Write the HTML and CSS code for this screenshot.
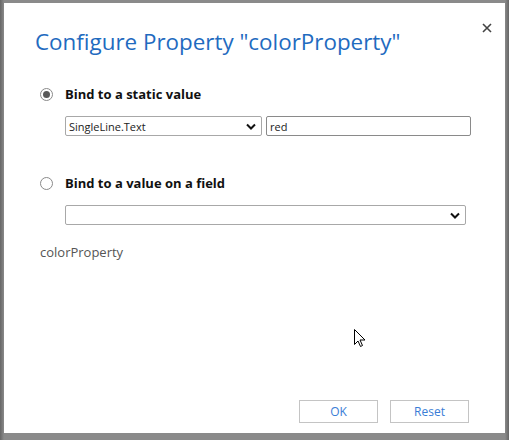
FILE: index.html
```html
<!DOCTYPE html>
<html>
<head>
<meta charset="utf-8">
<link rel="stylesheet" href="styles.css">
</head>
<body>
<div class="frame">
  <div class="dialog">
    <div class="header">
      <h1 class="title">Configure Property "colorProperty"</h1>
      <span class="close">
        <svg width="10" height="10" viewBox="0 0 10 10"><path d="M1 1 L9 9 M9 1 L1 9" stroke="#444" stroke-width="1.6" fill="none"/></svg>
      </span>
    </div>
    <div class="option">
      <span class="radio checked"></span>
      <span class="label">Bind to a static value</span>
    </div>
    <div class="controls">
      <div class="select short"><span class="sel-text">SingleLine.Text</span><svg class="chev" width="10" height="7" viewBox="0 0 10 7"><path d="M1 1.5 L5 5.5 L9 1.5" stroke="#111" stroke-width="2" fill="none"/></svg></div>
      <div class="input">red</div>
    </div>
    <div class="option second">
      <span class="radio"></span>
      <span class="label">Bind to a value on a field</span>
    </div>
    <div class="controls">
      <div class="select long"><span class="sel-text"></span><svg class="chev" width="10" height="7" viewBox="0 0 10 7"><path d="M1 1.5 L5 5.5 L9 1.5" stroke="#111" stroke-width="2" fill="none"/></svg></div>
    </div>
    <div class="prop">colorProperty</div>
    <div class="spacer"></div>
    <div class="buttons">
      <button class="btn">OK</button>
      <button class="btn">Reset</button>
    </div>
    <svg class="cursor" width="12" height="19" viewBox="0 0 12 19"><path d="M0.5 0.5 L0.5 15.5 L4 12 L6.5 17.5 L8.5 16.5 L6 11 L11 11 Z" fill="#fff" stroke="#000" stroke-width="1"/></svg>
  </div>
</div>
</body>
</html>
```
FILE: styles.css
```css
html, body {
  margin: 0;
  padding: 0;
  width: 509px;
  height: 440px;
  overflow: hidden;
}
body {
  background: #7b7b7b;
  font-family: "Open Sans", "Noto Sans", sans-serif;
}
.frame {
  padding: 3px 4px 7px 4px;
  height: 440px;
  box-sizing: border-box;
  background: linear-gradient(to right, #666 0, #8a8a8a 4px, #8a8a8a 505px, #666 509px);
}
.dialog {
  position: relative;
  background: #fff;
  height: 100%;
  box-sizing: border-box;
  display: flex;
  flex-direction: column;
  padding: 0 0 10px 32px;
}
.header {
  display: flex;
  align-items: flex-start;
  justify-content: space-between;
}
.title {
  margin: 24px 0 0 -1px;
  font-weight: 400;
  font-size: 22.4px;
  color: #1f6bbf;
  letter-spacing: 0;
  line-height: 30px;
}
.close {
  margin: 20px 13px 0 0;
  display: flex;
}
.option {
  display: flex;
  align-items: center;
  margin-top: 28px;
  margin-left: 4px;
}
.option.second {
  margin-top: 38px;
}
.radio {
  width: 11px;
  height: 11px;
  border: 1px solid #8a8a8a;
  border-radius: 50%;
  box-sizing: content-box;
  margin-right: 12px;
  position: relative;
}
.radio.checked::after {
  content: "";
  position: absolute;
  left: 2px;
  top: 2px;
  width: 7px;
  height: 7px;
  border-radius: 50%;
  background: #5a5a5a;
}
.label {
  font-weight: 700;
  font-size: 13px;
  color: #111;
}
.controls {
  display: flex;
  gap: 4px;
  margin-top: 13px;
  margin-left: 29px;
}
.select, .input {
  height: 20px;
  box-sizing: border-box;
  border: 1px solid #a8a8a8;
  border-radius: 2px;
  display: flex;
  align-items: center;
  font-size: 11px;
  color: #222;
}
.select {
  justify-content: space-between;
  padding: 0 5px 0 3px;
}
.select.short { width: 197px; }
.select.long { width: 401px; }
.input {
  width: 205px;
  padding-left: 3px;
  border-color: #8a8a8a;
}
.prop {
  margin-top: 18px;
  margin-left: 4px;
  font-size: 13px;
  color: #555;
}
.spacer { flex: 1; }
.buttons {
  display: flex;
  justify-content: flex-end;
  gap: 12px;
  padding-right: 36px;
}
.btn {
  width: 79px;
  height: 23px;
  background: #fff;
  border: 1px solid #c4c4c4;
  font-family: inherit;
  font-size: 12px;
  color: #3a7dd6;
  padding: 0;
}
.cursor {
  position: absolute;
  left: 350px;
  top: 326px;
}
```
